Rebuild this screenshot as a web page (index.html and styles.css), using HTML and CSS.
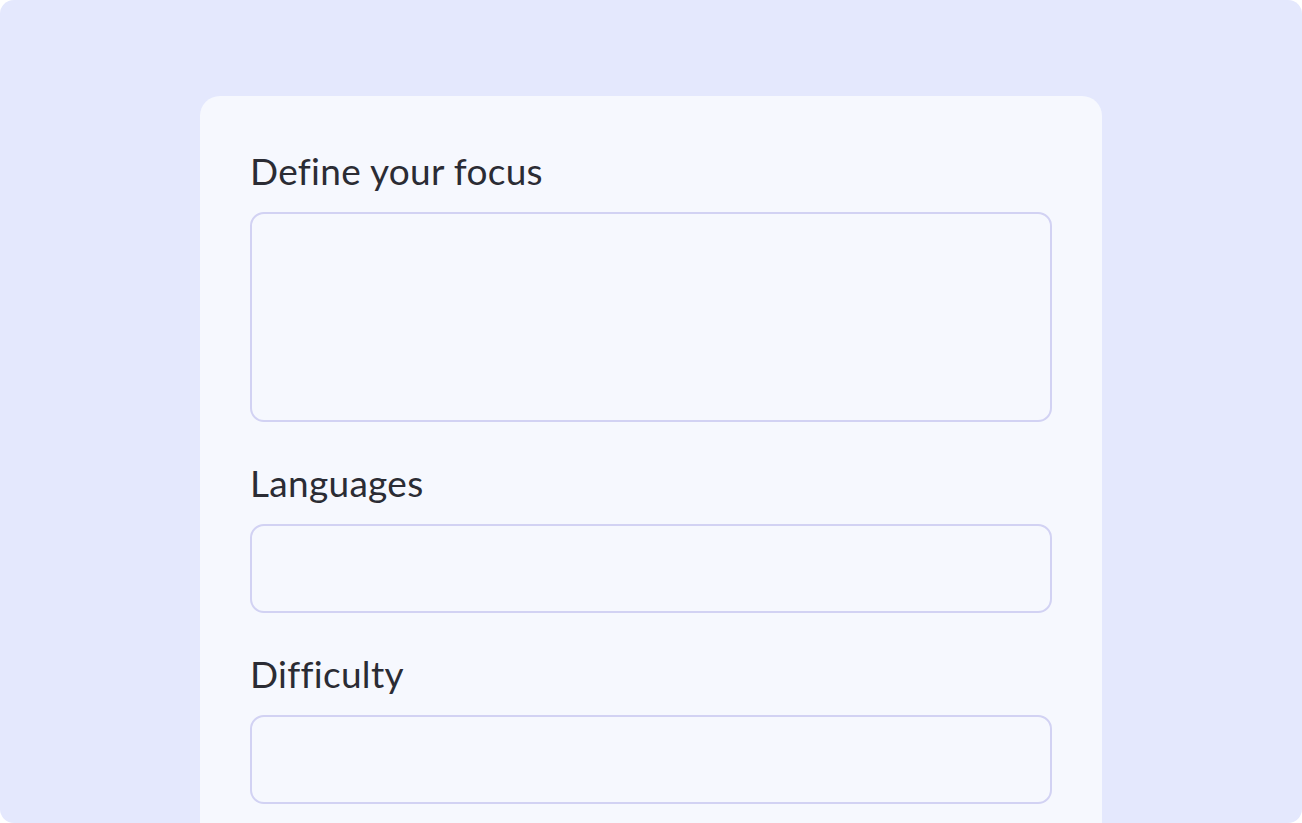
FILE: index.html
```html
<!DOCTYPE html>
<html lang="en">
<head>
  <meta charset="UTF-8" />
  <meta name="viewport" content="width=device-width, initial-scale=1.0" />
  <title>Define your focus</title>
  <link rel="stylesheet" href="styles.css">
</head>
<body>
  <div class="frame">
    <form class="card">
      <label class="field-label" for="focus">Define your focus</label>
      <textarea class="field field-area" id="focus"></textarea>

      <label class="field-label" for="languages">Languages</label>
      <input class="field" type="text" id="languages" />

      <label class="field-label" for="difficulty">Difficulty</label>
      <input class="field" type="text" id="difficulty" />
    </form>
  </div>
</body>
</html>
```

FILE: styles.css
```css
body {
  margin: 0;
  font-family: Lato, "Noto Sans", sans-serif;
  background: #ffffff;
}
.frame {
  height: 823px;
  box-sizing: border-box;
  background: #e4e8fd;
  border-radius: 14px;
  overflow: hidden;
  padding-top: 96px;
}
.card {
  width: 902px;
  margin: 0 auto;
  box-sizing: border-box;
  background: #f6f8fe;
  border-radius: 20px;
  padding: 52px 50px 50px;
}
.field-label {
  display: block;
  font-size: 37px;
  line-height: 45px;
  letter-spacing: 0.3px;
  color: #2b2c34;
  margin-bottom: 19px;
}
.field {
  display: block;
  width: 100%;
  height: 89px;
  box-sizing: border-box;
  margin: 0 0 38px;
  padding: 12px 16px;
  border: 2px solid #d2d2f3;
  border-radius: 14px;
  background: transparent;
  font: inherit;
  outline: none;
}
.field-area {
  height: 210px;
  resize: none;
}
```
